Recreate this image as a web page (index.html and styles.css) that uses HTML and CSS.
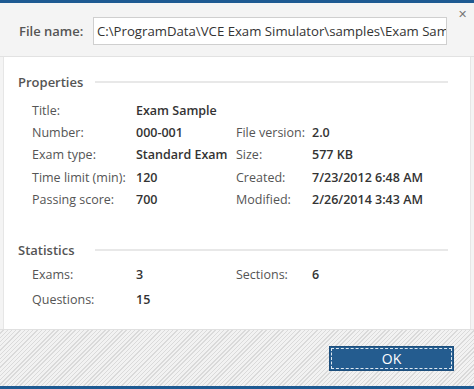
FILE: index.html
```html
<!DOCTYPE html>
<html lang="en">
<head>
    <meta charset="UTF-8">
    <title>Exam Properties</title>
    <link rel="stylesheet" href="styles.css">
</head>
<body>
    <div class="dialog">
        <div class="top-bar"></div>
        <div class="header">
            <span class="close">&#x2715;</span>
            <label class="file-label">File name:</label>
            <div class="file-input">C:\ProgramData\VCE Exam Simulator\samples\Exam Sample.vce</div>
        </div>
        <div class="content">
            <div class="section-title"><span>Properties</span><div class="rule"></div></div>
            <div class="props">
                <div class="label">Title:</div>
                <div class="value wide">Exam Sample</div>

                <div class="label">Number:</div>
                <div class="value">000-001</div>
                <div class="label">File version:</div>
                <div class="value">2.0</div>

                <div class="label">Exam type:</div>
                <div class="value">Standard Exam</div>
                <div class="label">Size:</div>
                <div class="value">577 KB</div>

                <div class="label">Time limit (min):</div>
                <div class="value">120</div>
                <div class="label">Created:</div>
                <div class="value">7/23/2012 6:48 AM</div>

                <div class="label">Passing score:</div>
                <div class="value">700</div>
                <div class="label">Modified:</div>
                <div class="value">2/26/2014 3:43 AM</div>
            </div>

            <div class="section-title stats-title"><span>Statistics</span><div class="rule"></div></div>
            <div class="stats">
                <div class="label">Exams:</div>
                <div class="value">3</div>
                <div class="label">Sections:</div>
                <div class="value">6</div>

                <div class="label">Questions:</div>
                <div class="value">15</div>
            </div>
        </div>
        <div class="footer">
            <button class="ok-button">OK</button>
        </div>
        <div class="bottom-bar"></div>
    </div>
</body>
</html>
```

FILE: styles.css
```css
body {
    margin: 0;
    padding: 0;
    font-family: "Open Sans", sans-serif;
    font-size: 12.5px;
    color: #555;
    background-color: #f4f4f4;
}

.dialog {
    width: 474px;
    height: 389px;
    display: flex;
    flex-direction: column;
}

.top-bar, .bottom-bar {
    height: 3px;
    background-color: #1e5a92;
}

.header {
    position: relative;
    height: 54px;
    display: flex;
    align-items: center;
    padding: 2px 27px 0 19px;
    box-sizing: border-box;
    background-color: #f4f4f4;
    border-bottom: 1px solid #e2e2e2;
}

.close {
    position: absolute;
    top: 3px;
    right: 7px;
    font-size: 11px;
    color: #777;
}

.file-label {
    width: 74px;
    font-weight: 600;
    color: #555;
    font-size: 13px;
}

.file-input {
    flex: 1;
    height: 26px;
    line-height: 26px;
    padding: 0 3px;
    background-color: #fff;
    border: 1px solid #cfcfcf;
    color: #333;
    font-size: 13.2px;
    white-space: nowrap;
    overflow: hidden;
}

.content {
    flex: 1;
    background-color: #fff;
    margin: 0 3px;
    border-left: 1px solid #e6e6e6;
    border-right: 1px solid #e6e6e6;
    padding: 16px 22px 0 14px;
}

.section-title {
    display: flex;
    align-items: center;
    font-weight: 600;
    font-size: 13px;
    color: #555;
}

.section-title span {
    width: 77px;
}

.rule {
    flex: 1;
    height: 2px;
    background-color: #e8e8e8;
}

.stats-title {
    margin-top: 31px;
}

.props, .stats {
    display: grid;
    grid-template-columns: 104px 100px 76px 1fr;
    padding-left: 14px;
    align-items: center;
}

.props {
    grid-auto-rows: 22.3px;
    margin-top: 8px;
}

.stats {
    grid-auto-rows: 25px;
    margin-top: 3px;
}

.label {
    white-space: nowrap;
}

.value {
    font-weight: 600;
    color: #333;
    white-space: nowrap;
}

.value.wide {
    grid-column: 2 / 5;
}

.footer {
    height: 56px;
    display: flex;
    align-items: center;
    justify-content: flex-end;
    padding-right: 20px;
    border-top: 1px solid #e0e0e0;
    background-color: #ececec;
    background-image: repeating-linear-gradient(135deg, #f2f2f2 0, #f2f2f2 2px, #dadada 2px, #dadada 3px);
}

.ok-button {
    width: 125px;
    height: 25px;
    background-color: #245c8f;
    color: #fff;
    font-family: "Open Sans", sans-serif;
    font-size: 14px;
    border: 1px solid #1d4f7d;
    outline: 1px dashed #dfe8f0;
    outline-offset: -3px;
    cursor: pointer;
}
```
